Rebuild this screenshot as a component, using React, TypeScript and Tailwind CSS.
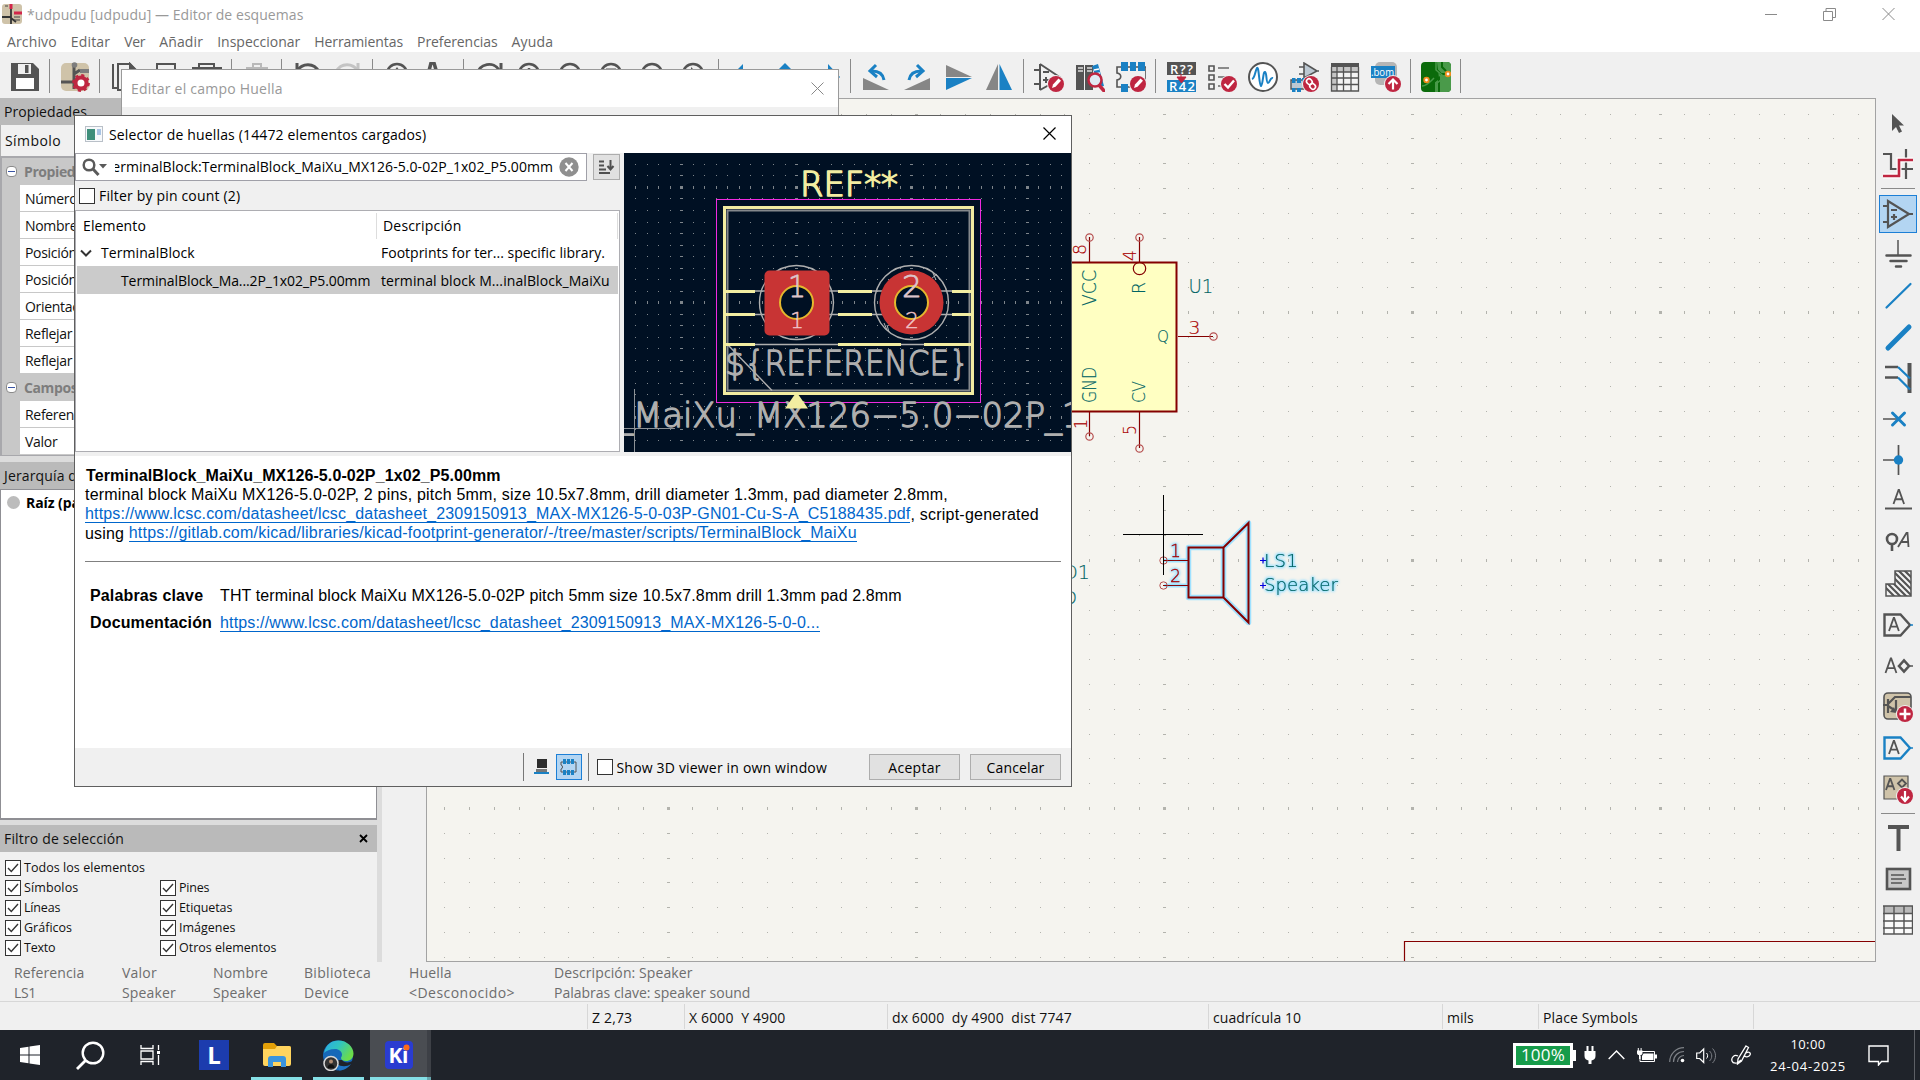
import React, { useLayoutEffect, useRef, useState } from "react";

const DARK = "#545454";
const BLUE = "#1a81c4";
const RED = "#bf2641";

/* Text run whose tracking is tuned so that it fills a known width. */
function Label({ children, w, className = "" }: { children: string; w?: number; className?: string }) {
  const ref = useRef<HTMLSpanElement>(null);
  const [spacing, setSpacing] = useState(0);
  useLayoutEffect(() => {
    if (w && ref.current) setSpacing((w - ref.current.offsetWidth) / children.length);
  }, []);
  return (
    <span
      ref={ref}
      className={"inline-block shrink-0 whitespace-pre " + className}
      style={w ? { letterSpacing: spacing } : undefined}
    >
      {children}
    </span>
  );
}

function Icon({ children, size = 30 }: { children: React.ReactNode; size?: number }) {
  return (
    <svg width={size} height={size} viewBox="0 0 30 30" fill="none" className="shrink-0">
      {children}
    </svg>
  );
}

function Badge({ children }: { children: React.ReactNode }) {
  return (
    <g>
      <circle cx="22" cy="22" r="9" fill="#f0f0f0" />
      <circle cx="22" cy="22" r="8" fill={RED} />
      {children}
    </g>
  );
}

const pencil = <path d="M18 26l1-3.500 5.500-6 2.500 2.300-5.500 6z" fill="#fff" />;

const lens = (
  <g stroke={DARK} strokeWidth="2.600">
    <circle cx="14" cy="12" r="10" />
    <path d="M21 20l8 8" />
  </g>
);

const topGroups: React.ReactNode[][] = [
  [
    <g>
      <path d="M1 1h22l6 6v22H1z" fill={DARK} />
      <path d="M8 2h13v10H8z" fill="#f0f0f0" />
      <path d="M15 3h3.500v8H15z" fill={DARK} />
      <path d="M6 16h18v11H6z" fill="#fff" />
    </g>,
  ],
  [
    <g>
      <rect x="1" y="1" width="28" height="28" rx="5" fill="#cfc3a9" />
      <path d="M14 1v26M1 20h12M14 12l6-4M14 17l6 5" stroke={DARK} strokeWidth="3" />
      <circle cx="14.500" cy="3" r="2.800" fill="#7d7d7d" />
      <rect x="20" y="7" width="9" height="4" fill="#7d7d7d" />
      <circle cx="21" cy="21" r="5.500" stroke={RED} strokeWidth="4" fill="#fff" />
      <circle cx="21" cy="21" r="7.600" stroke={RED} strokeWidth="2.600" strokeDasharray="3 2.970" />
      <circle cx="21" cy="21" r="2" fill="#fff" />
    </g>,
  ],
  [
    <g stroke={DARK} strokeWidth="2"><path d="M3 2v24h5M8 28V2h12l7 7v19z" /><path d="M20 2v8h7z" fill={DARK} /></g>,
    <g><path d="M6 9V2h18v7" stroke={DARK} strokeWidth="2" /><path d="M2 8h26v13H2z" fill={DARK} /></g>,
    <g><path d="M7 6V2h15v4" stroke={DARK} strokeWidth="2" /><path d="M0 5h30v14H0z" fill={DARK} /></g>,
  ],
  [<g stroke="#b9b9b9" strokeWidth="2"><path d="M5 6h20v22H5z" /><path d="M11 5V2h8v3" /></g>],
  [
    <g stroke={DARK} strokeWidth="3"><path d="M5 9C10 1 22 0 27 10" /><path d="M5 1v10h9" /></g>,
    <g stroke="#c4c4c4" strokeWidth="3"><path d="M3 10C8 0 20 1 25 9" /><path d="M25 1v10h-9" /></g>,
  ],
  [
    <g>{lens}<path d="M14 5l5 7h-10z" fill={DARK} /></g>,
    <g><path d="M0 28L7 1h3l8 27" stroke={DARK} strokeWidth="3.500" /></g>,
  ],
  [
    <g stroke={DARK} strokeWidth="3"><path d="M3 13C5 1 20-1 25 8" /><path d="M27 1v9h-9" /></g>,
    <g>{lens}<path d="M14 6v12M8 12h12" stroke={DARK} strokeWidth="2.500" /></g>,
    <g>{lens}<path d="M8 12h12" stroke={DARK} strokeWidth="2.500" /></g>,
    <g>{lens}<path d="M9 7h10v10H9z" fill="#8a8a8a" stroke={DARK} /></g>,
    <g>{lens}<path d="M9 9h10v8H9z" fill={DARK} /></g>,
    <g>{lens}<path d="M12 5l8 8h-8z" fill={DARK} /></g>,
  ],
  [
    <path d="M14 2v26L1 15z" fill={BLUE} />,
    <path d="M15 1l14 14H1z" fill={BLUE} />,
    <path d="M17 2v26l12-13z" fill={BLUE} />,
  ],
  [
    <g><path d="M2 16v12h26z" fill="#868686" /><path d="M23 18c-1-6-5-9-12-9" stroke={BLUE} strokeWidth="3" /><path d="M15 3l-6 6 7 6" stroke={BLUE} strokeWidth="3" /></g>,
    <g><path d="M28 16v12H2z" fill="#868686" /><path d="M7 18c1-6 5-9 12-9" stroke={BLUE} strokeWidth="3" /><path d="M15 3l6 6-7 6" stroke={BLUE} strokeWidth="3" /></g>,
    <g><path d="M3 3v12h26z" fill="#868686" /><path d="M3 16h26L3 28z" fill={BLUE} /></g>,
    <g><path d="M14 2v26H2z" fill="#868686" /><path d="M15.500 2v26H28z" fill={BLUE} /></g>,
  ],
  [
    <g stroke={DARK} strokeWidth="2"><path d="M6 2v26M6 2l21 14M6 28l9-5M0 8h6M0 22h6M9 10h6M9 18h6M12 15v6" /><g stroke="none"><Badge>{pencil}</Badge></g></g>,
    <g>
      <path d="M1 3h8v25H1zM10 3h8v25h-8z" fill={DARK} />
      <path d="M3 6h5M3 9h5M12 6h5M12 9h5" stroke="#ddd" strokeWidth="1.500" />
      <path d="M17 4l6-2 6 22-5 1z" fill={BLUE} />
      <path d="M19 8l5-1M20 12l5-1" stroke="#fff" strokeWidth="1.500" />
      <circle cx="20" cy="18" r="6.500" stroke={RED} strokeWidth="2.500" fill="#dfeaf3" />
      <path d="M24 23l6 7" stroke={RED} strokeWidth="3.500" />
    </g>,
    <g>
      <path d="M1 5v6c5 1 5 6 0 7v7h29V5z" stroke={DARK} strokeWidth="1.600" />
      <path d="M5 0h7v9H5zM14 0h6v9h-6zM22 0h7v9h-7zM5 22h7v8H5z" fill={BLUE} />
      <Badge>{pencil}</Badge>
    </g>,
  ],
  [
    <g>
      <rect x="1" y="0" width="29" height="13" fill={DARK} />
      <rect x="1" y="18" width="29" height="12" fill={BLUE} />
      <text x="4" y="11.500" fontSize="13" fontWeight="600" fill="#fff" fontFamily="Open Sans" textLength="23">R??</text>
      <text x="3" y="29" fontSize="13" fontWeight="600" fill="#fff" fontFamily="Open Sans" textLength="26">R42</text>
      <path d="M15 12v4M11 15h9l-4.500 6z" fill={RED} stroke={RED} />
    </g>,
    <g>
      <path d="M2 4h5v5H2zM2 13h5v5H2zM2 22h5v5H2z" stroke={DARK} strokeWidth="1.600" />
      <path d="M11 6h11M11 15h8M11 24h5" stroke="#8a8a8a" strokeWidth="1.800" />
      <Badge><path d="M17.500 22l3.500 3.500 6-7" stroke="#fff" strokeWidth="2.400" /></Badge>
    </g>,
    <g>
      <circle cx="15" cy="15" r="14" stroke={DARK} strokeWidth="2" fill="#fff" />
      <path d="M4 17c3-1 3-8 5-11 2-2 2 17 4 18 2-1 2-15 4-14 2 1 1 11 3 11s2-6 5-5" stroke={BLUE} strokeWidth="2" />
    </g>,
    <g>
      <path d="M15 1v15l13-7zM10 5h5M10 12h5M28 9h2" stroke={DARK} strokeWidth="1.600" fill="#bcc8d2" />
      <path d="M2 18h18v9H2z" fill="#bcc8d2" stroke={DARK} strokeWidth="1.400" />
      <path d="M3 16h3.500v5H3zM8 16h4v5H8zM3 26h3.500v4H3zM8 26h4v4H8zM13 16h3v5h-3z" fill={BLUE} />
      <Badge>
        <rect x="17" y="17" width="6" height="5" rx="2.500" stroke="#fff" strokeWidth="1.600" transform="rotate(45 20 20)" />
        <rect x="21" y="22" width="6" height="5" rx="2.500" stroke="#fff" strokeWidth="1.600" transform="rotate(45 24 24)" />
      </Badge>
    </g>,
    <g>
      <path d="M1 1h28v4H1z" fill={DARK} />
      <path d="M1 5h28v5H1zM1 10h6v19H1z" fill="#c5c5c5" />
      <path d="M7 10h22v19H7z" fill="#f4f4f4" />
      <path d="M1.500 5v24h27V5M7 5v24M13.500 5v24M21 5v24M1 10h28M1 16h28M1 22.500h28" stroke={DARK} strokeWidth="1.300" />
    </g>,
    <g>
      <rect x="4" y="0" width="22" height="23" rx="5" fill="#b5b5b5" />
      <rect x="0" y="4" width="24" height="12" fill={BLUE} />
      <text x="0" y="13.500" fontSize="10" fill="#fff" fontFamily="Open Sans" textLength="23" lengthAdjust="spacingAndGlyphs">.bom</text>
      <Badge><path d="M22 27.500v-9M17.500 22l4.500-4.500 4.500 4.500" stroke="#fff" strokeWidth="2.200" /></Badge>
    </g>,
  ],
  [
    <g>
      <rect width="30" height="30" rx="4" fill="#0b6b0b" />
      <path d="M16 0h10a4 4 0 0 1 4 4v22a4 4 0 0 1-4 4H14V20l4-4z" fill="#4a9a4a" />
      <path d="M15 0v7l5 5h7M21 0v5l4 4M5 18l5-4V0M10 30v-8l8-6v14" stroke="#0b6b0b" strokeWidth="2" />
      <path d="M15 0v8l6 5v4l-6 5v8M1 24c5 0 8-4 12-8" stroke="#4a9a4a" strokeWidth="1.500" />
      <circle cx="27" cy="12" r="2.300" fill="#fff" stroke="#f08c1a" strokeWidth="1.800" />
      <circle cx="5.500" cy="18" r="2.300" fill="#fff" stroke="#f08c1a" strokeWidth="1.800" />
    </g>,
  ],
];

const arrowTail = <path d="M27 15h3" stroke={BLUE} strokeWidth="1.500" />;
const glyphA = (x: number, y: number, h: number) => (
  <path d={`M${x} ${y}l${h * 0.36}-${h}h.5l${h * 0.36} ${h}M${x + h * 0.13} ${y - h * 0.34}h${h * 0.5}`} stroke={DARK} strokeWidth="1.800" />
);

const sideTop: React.ReactNode[] = [
  <path d="M9 6v17l4-4 3 6 3-1.500-3-6h5z" fill={DARK} />,
  <g><path d="M0 5h8v15h8M14 20h16M23 0v30" stroke={DARK} strokeWidth="2.200" /><path d="M0 27h16V11h14" stroke="#fff" strokeWidth="5" /><path d="M0 27h16V11h14" stroke={RED} strokeWidth="2.600" /></g>,
];

const sideMid: React.ReactNode[] = [
  <g stroke={DARK} strokeWidth="2.200"><path d="M5 2v26l21-13zM0 7h5M0 23h5M26 15h4M8 11h6M8 18h6M11 15v6" /></g>,
  <g stroke={DARK}><path d="M15 0v15" strokeWidth="1.500" /><path d="M3.500 15.500h24M7.500 21h16M13 26.500h5" strokeWidth="2.500" strokeLinecap="round" /></g>,
  <path d="M3.500 26.500l24-23.500" stroke={BLUE} strokeWidth="2.200" strokeLinecap="round" />,
  <path d="M5 26l21-21" stroke={BLUE} strokeWidth="5" strokeLinecap="round" />,
  <g><path d="M2 4h13M2 14.500h13" stroke={DARK} strokeWidth="2.500" /><path d="M26.500 0v30" stroke={DARK} strokeWidth="4" /><path d="M15 4l12 11.500M15 14.500l12 12" stroke={BLUE} strokeWidth="2.200" /></g>,
  <g><path d="M0 15h15" stroke={DARK} strokeWidth="1.500" /><path d="M9.500 9l12 12M21.500 9l-12 12" stroke={BLUE} strokeWidth="3" strokeLinecap="round" /></g>,
  <g><path d="M0 15h15M15.500 0v30" stroke={DARK} strokeWidth="1.700" /><circle cx="15.500" cy="15" r="4.700" fill={BLUE} /></g>,
  <g>{glyphA(10.5, 18, 14)}<path d="M2 22.500h27" stroke={DARK} strokeWidth="2" /></g>,
  <g><circle cx="9" cy="12" r="5" stroke={DARK} strokeWidth="2.600" /><path d="M9 17v7" stroke={DARK} strokeWidth="2.600" /><path d="M15 20l8.500-14h1l1 14M18 15h7" stroke={DARK} strokeWidth="1.800" /></g>,
  <g>
    <clipPath id="hatch"><path d="M12 2h16v25H3V15h9z" /></clipPath>
    <path d="M12 2h16v25H3V15h9z" fill="#f4f4f4" />
    <g clipPath="url(#hatch)"><path d="M8-6l30 30M2-6l34 34M-4-6l36 36M-10-6l38 38M-6 4l28 28M-6 10l24 24M14-6l30 30" stroke={DARK} strokeWidth="2.200" /></g>
    <path d="M12 2h16v25H3V15h9z" stroke={DARK} strokeWidth="1.500" />
  </g>,
  <g><path d="M1.500 4.500h16L27 15l-9.500 10.500h-16z" stroke={DARK} strokeWidth="2.400" />{glyphA(6, 21, 13)}{arrowTail}</g>,
  <g><g>{glyphA(2.5, 22, 14.5)}</g><path d="M16 15l5-5.500 5 5.500-5 5.500z" stroke={DARK} strokeWidth="2.600" /><path d="M26 15h4" stroke={DARK} strokeWidth="1.500" /></g>,
  <g>
    <rect x="1" y="1" width="27" height="26" rx="4" fill="#cfc3a9" stroke={DARK} strokeWidth="1.600" />
    <path d="M5 7v14M0 13h5M5 12l7-7h16M5 14l8 5M13 20V8" stroke={DARK} strokeWidth="2.200" />
    <path d="M13 21l-6-1 4-5z" fill={DARK} />
    <Badge><path d="M22 16.500v11M16.500 22h11" stroke="#fff" strokeWidth="2.500" /></Badge>
  </g>,
  <g><path d="M1.500 4.500h16L27 15l-9.500 10.500h-16z" stroke={BLUE} strokeWidth="2.400" />{glyphA(6, 21, 13)}{arrowTail}</g>,
  <g>
    <path d="M1 2h24v23H1z" fill="#cfc3a9" stroke={DARK} strokeWidth="1.200" />
    {glyphA(3, 16, 11)}
    <path d="M15 9.500l4-4 4 4-4 4z" stroke={DARK} strokeWidth="1.800" />
    <Badge><path d="M22 17v9M18 22.500l4 4.500 4-4.500" stroke="#fff" strokeWidth="2.200" /></Badge>
  </g>,
];

const sideEnd: React.ReactNode[] = [
  <path d="M5 2h21v4h-8.500v22h-4V6H5z" fill={DARK} />,
  <g><rect x="4" y="5" width="23" height="20" fill="#c8c8c8" stroke={DARK} strokeWidth="2.600" /><path d="M8 11h13M8 15h15M8 19h11" stroke={DARK} strokeWidth="1.500" /></g>,
  <g><path d="M1 1h29v8H1z" fill="#b9b9b9" /><path d="M1 9h29v21H1z" fill="#fafafa" /><path d="M1 .5v29M11 .5v29M21 .5v29M29.500 .5v29M0 1h30M0 8.500h30M0 16h30M0 23h30M0 29h30" stroke={DARK} strokeWidth="1.400" /></g>,
];

function VSep({ className = "" }: { className?: string }) {
  return (
    <div className={"flex w-[9px] justify-center " + className}>
      <div className="w-px bg-[#8a8a8a]" />
    </div>
  );
}

function Check({ on }: { on?: boolean }) {
  return (
    <span className="flex h-4 w-4 shrink-0 items-center justify-center border border-[#333] bg-white">
      {on && (
        <svg width="12" height="12" viewBox="0 0 12 12" fill="none">
          <path d="M1 6l3.300 3.500L11 2" stroke="#333" strokeWidth="1.400" />
        </svg>
      )}
    </span>
  );
}

/* Canvas grid: plain points, with longer ticks on every tenth row and column. */
function Grid(p: { x0: number; y0: number; nx: number; ny: number; step: number; mx: number; my: number; color: string }) {
  const marks: React.ReactNode[] = [];
  for (let i = 0; i < p.nx; i++)
    for (let j = 0; j < p.ny; j++) {
      const w = (i - p.mx) % 10 === 0 ? 3 : 1;
      const h = (j - p.my) % 10 === 0 ? 3 : 1;
      const x = Math.round(p.x0 + i * p.step - w / 2);
      const y = Math.round(p.y0 + j * p.step - h / 2);
      marks.push(<rect key={i + "-" + j} x={x} y={y} width={w} height={h} />);
    }
  return <g fill={p.color} shapeRendering="crispEdges">{marks}</g>;
}

/* Stroke-style lettering used on both drawing canvases. */
function Stroke(p: { x: number; y: number; w: number; cap: number; color: string; t: string; up?: boolean; weight?: number; halo?: boolean }) {
  const common = {
    fontFamily: '"DejaVu Sans Light", "DejaVu Sans", sans-serif',
    fontWeight: 200,
    fontSize: p.cap / 0.729,
    textLength: p.w,
    lengthAdjust: "spacingAndGlyphs" as const,
    strokeLinejoin: "round" as const,
  };
  return (
    <g transform={`translate(${p.x} ${p.y})${p.up ? " rotate(-90)" : ""}`}>
      <text
        {...common}
        fill={p.color}
        stroke={p.color}
        strokeWidth={p.weight ?? 0.15}
        className={p.halo ? "[filter:drop-shadow(0_0_1px_#9fe1ff)_drop-shadow(0_0_1px_#9fe1ff)_drop-shadow(0_0_1px_#9fe1ff)]" : ""}
      >
        {p.t}
      </text>
    </g>
  );
}

function Schematic() {
  const teal = "#006464";
  const pin = "#a90000";
  const body = "#840000";
  const speaker = "M1188.500 547.500h35v50h-35zM1223.500 547.500l25-24.500v99.500l-25-25";
  return (
    <svg width="1448" height="862" viewBox="427 99 1448 862" className="block">
      <Grid x0={444.8} y0={114} nx={58} ny={35} step={24.8} mx={9} my={8} color="#b3b3ad" />
      <path d="M1875 941.500H1404.500V961" stroke={body} strokeWidth="1.200" fill="none" />
      <rect x="1000" y="262.500" width="176.500" height="149" fill="#ffffc2" stroke={body} strokeWidth="2" />
      <g stroke={body} strokeWidth="1.200" fill="none">
        <path d="M1089.500 237v25M1139.500 237v25M1089.500 412v24M1139.500 412v36M1178 336.500h35" />
        <circle cx="1139.500" cy="268.500" r="6.200" />
        <g stroke="#b65050">
          <circle cx="1089.500" cy="237.500" r="3.700" />
          <circle cx="1139.500" cy="237.500" r="3.700" />
          <circle cx="1089.500" cy="436.500" r="3.700" />
          <circle cx="1139.500" cy="448.500" r="3.700" />
          <circle cx="1213.500" cy="336.500" r="3.700" />
        </g>
      </g>
      <Stroke t="8" x={1086} y={255} w={11} cap={13} color={pin} up />
      <Stroke t="4" x={1136} y={261} w={11} cap={13} color={pin} up />
      <Stroke t="1" x={1087} y={429} w={10} cap={13} color={pin} up />
      <Stroke t="5" x={1136} y={435} w={10} cap={13} color={pin} up />
      <Stroke t="3" x={1188.500} y={334} w={12} cap={13} color={pin} />
      <Stroke t="VCC" x={1096} y={306} w={36} cap={14} color={teal} up />
      <Stroke t="R" x={1145} y={294} w={12} cap={13} color={teal} up />
      <Stroke t="GND" x={1096} y={403} w={36} cap={14} color={teal} up />
      <Stroke t="CV" x={1145} y={403} w={22} cap={13} color={teal} up />
      <Stroke t="Q" x={1157} y={342} w={12} cap={12} color={teal} />
      <Stroke t="U1" x={1188.500} y={293} w={25} cap={14} color={teal} />
      <Stroke t="D1" x={1063} y={579} w={27} cap={14} color={teal} />
      <Stroke t="D" x={1063} y={604} w={14} cap={13} color={teal} />
      <g fill="none">
        <path d={speaker} stroke="#9fe1ff" strokeWidth="5.500" strokeLinejoin="round" />
        <path d="M1166 560.500h22M1166 585.500h22" stroke="#9fe1ff" strokeWidth="4" strokeLinecap="round" />
        <path d={speaker} stroke={body} strokeWidth="2" />
        <path d="M1163 560.500h25M1163 585.500h25" stroke={body} strokeWidth="1.200" />
        <circle cx="1163.500" cy="560.500" r="3.700" stroke="#b65050" />
        <circle cx="1163.500" cy="585.500" r="3.700" stroke="#b65050" />
      </g>
      <Stroke t="1" x={1170} y={557} w={11} cap={12.500} color={pin} halo weight={0.3} />
      <Stroke t="2" x={1170} y={582} w={11} cap={12.500} color={pin} halo weight={0.3} />
      <Stroke t="LS1" x={1264} y={566.500} w={34} cap={13} color={teal} halo weight={0.2} />
      <Stroke t="Speaker" x={1264} y={591} w={74} cap={13} color={teal} halo weight={0.2} />
      <path d="M1260 560.500h6M1263 557.500v6M1260 585.500h6M1263 582.500v6" stroke="#0000e0" strokeWidth="1.200" />
      <path d="M1163.500 495v79.500M1123 534.500h80" stroke="#000" strokeWidth="1" shapeRendering="crispEdges" />
    </svg>
  );
}

function Preview() {
  const silk = "#f2eda1";
  const fab = "#afafaf";
  return (
    <svg width="447" height="299" viewBox="624 153 447 299" className="block shrink-0 bg-[#001023]">
      <Grid x0={635.5} y0={164.4} nx={38} ny={25} step={11.52} mx={4} my={2} color="#7e858b" />
      <rect x="727.500" y="210.500" width="242" height="180" fill="none" stroke="#84888c" strokeWidth="2" />
      <path d="M727 344l45 46.500" stroke={fab} strokeWidth="1.400" />
      <path d="M725 291h248M725 314.500h248M725 344.500h248" stroke={fab} strokeWidth="1.400" />
      <rect x="724.500" y="207.500" width="248" height="186" fill="none" stroke={silk} strokeWidth="3" />
      <path d="M725 291.500h30M838 291.500h34M952 291.500h20M725 314.500h30M838 314.500h34M952 314.500h20M725 344.500h30M838 344.500h63M924 344.500h48" stroke={silk} strokeWidth="3" />
      <circle cx="796.500" cy="302.500" r="37" fill="none" stroke={fab} strokeWidth="1.400" />
      <circle cx="911.500" cy="302.500" r="37" fill="none" stroke={fab} strokeWidth="1.400" />
      <path d="M884 323l3 7M887 325l2 7M933 273l3 7M936 274l4 6M931 279l6-5" stroke={fab} />
      <rect x="764.500" y="270.500" width="65" height="65" rx="5" fill="#c83434" />
      <circle cx="911.500" cy="302.500" r="32" fill="#c83434" />
      <g fill="#001023" stroke="#e3b72e" strokeWidth="2">
        <circle cx="796.500" cy="302.500" r="16.500" />
        <circle cx="911.500" cy="302.500" r="16.500" />
      </g>
      <Stroke t="1" x={788} y={297} w={18} cap={22} color="#dcc4ca" weight={0.8} />
      <Stroke t="2" x={902} y={297} w={20} cap={22} color="#dcc4ca" weight={0.8} />
      <Stroke t="1" x={790} y={328} w={14} cap={15} color="#f0c4c8" weight={0.4} />
      <Stroke t="2" x={905} y={328} w={14} cap={15} color="#f0c4c8" weight={0.4} />
      <rect x="716.500" y="199.500" width="264" height="203" fill="none" stroke="#f02adf" />
      <Stroke t="REF**" x={800} y={196} w={98} cap={24} color={silk} weight={1.500} />
      <Stroke t="${REFERENCE}" x={725} y={375} w={244} cap={24} color={fab} weight={1.300} />
      <Stroke t="_" x={612} y={427} w={21} cap={24} color={fab} weight={1.300} />
      <Stroke t="MaiXu_MX126−5.0−02P_" x={633} y={427} w={429} cap={24} color={fab} weight={1.300} />
      <Stroke t="1" x={1062} y={427} w={20} cap={24} color={fab} weight={1.300} />
      <path d="M634.500 389v63M624 428.500h51" stroke="#8c9196" fill="none" shapeRendering="crispEdges" />
      <path d="M796.500 392l11.500 16.500h-23z" fill={silk} />
    </svg>
  );
}

function PanelHeader({ children, w, closable }: { children: string; w: number; closable?: boolean }) {
  return (
    <div className="flex h-[27px] shrink-0 items-center justify-between bg-[#bababa] pl-[4px] pr-[9px]">
      <Label w={w}>{children}</Label>
      {closable && (
        <svg width="9" height="9" viewBox="0 0 9 9">
          <path d="M1 1l7 7M8 1l-7 7" stroke="#000" strokeWidth="1.800" />
        </svg>
      )}
    </div>
  );
}

function PropCategory({ children }: { children: string }) {
  return (
    <div className="flex h-[27px] items-center gap-[7px] bg-[#c8c8c8] pl-[4px] font-bold text-[#7d7d7d]">
      <span className="flex h-[11px] w-[11px] items-center justify-center rounded-sm border border-[#8a8a8a] bg-white">
        <span className="h-px w-[7px] bg-[#3a55a5]" />
      </span>
      <span className="tracking-[-0.4px]">{children}</span>
    </div>
  );
}

function PropRow({ children }: { children: string }) {
  return (
    <div className="flex h-[27px] bg-[#c8c8c8]">
      <div className="ml-[18px] flex flex-1 items-center border-b border-[#c8c8c8] bg-white pl-[5px] pt-[2px]">
        <span className="tracking-[-0.3px]">{children}</span>
      </div>
    </div>
  );
}

function FilterItem({ children, w }: { children: string; w: number }) {
  return (
    <div className="flex h-5 w-[155px] items-center gap-[3px]">
      <Check on />
      <Label w={w} className="text-[12.500px]">{children}</Label>
    </div>
  );
}

function LeftPanels() {
  return (
    <div className="flex w-[382px] shrink-0 border-r-[5px] border-[#dcdcdc]">
      <div className="flex flex-1 flex-col">
        <PanelHeader w={83}>Propiedades</PanelHeader>
        <div className="flex h-[31px] items-center border-l border-[#b0b0b0] pl-[4px]">
          <Label w={56}>Símbolo</Label>
        </div>
        <div className="h-[300px] border-2 border-[#a8a8ac] bg-white">
          <PropCategory>Propiedades básicas</PropCategory>
          <PropRow>Número de unidad</PropRow>
          <PropRow>Nombre de unidad</PropRow>
          <PropRow>Posición X</PropRow>
          <PropRow>Posición Y</PropRow>
          <PropRow>Orientación</PropRow>
          <PropRow>Reflejar X</PropRow>
          <PropRow>Reflejar Y</PropRow>
          <PropCategory>Campos</PropCategory>
          <PropRow>Referencia</PropRow>
          <PropRow>Valor</PropRow>
        </div>
        <div className="h-[6px] bg-[#dcdcdc]" />
        <PanelHeader w={150}>Jerarquía del esquema</PanelHeader>
        <div className="h-[331px] border border-b-2 border-[#8f8f94] bg-white">
          <div className="flex h-[25px] items-center gap-[6px] pl-[6px] font-bold text-black">
            <span className="h-[13px] w-[13px] rounded-full bg-[#bcbcbc]" />
            <Label w={100}>Raíz (página 1)</Label>
          </div>
        </div>
        <div className="h-[5px] bg-[#dcdcdc]" />
        <PanelHeader w={120} closable>Filtro de selección</PanelHeader>
        <div className="flex flex-1 flex-col pl-[5px] pt-[6px]">
          <FilterItem w={121}>Todos los elementos</FilterItem>
          <div className="grid grid-cols-[155px_155px]">
            <FilterItem w={54}>Símbolos</FilterItem>
            <FilterItem w={30}>Pines</FilterItem>
            <FilterItem w={36}>Líneas</FilterItem>
            <FilterItem w={53}>Etiquetas</FilterItem>
            <FilterItem w={48}>Gráficos</FilterItem>
            <FilterItem w={56}>Imágenes</FilterItem>
            <FilterItem w={31}>Texto</FilterItem>
            <FilterItem w={97}>Otros elementos</FilterItem>
          </div>
        </div>
      </div>
    </div>
  );
}

function SideTool({ children, active }: { children: React.ReactNode; active?: boolean }) {
  return (
    <div className="flex h-[41.100px] items-center justify-center">
      <div className={"flex h-[38px] w-[38px] items-center justify-center " + (active ? "border border-[#1c7fd6] bg-[#b3d5f2]" : "")}>
        <Icon>{children}</Icon>
      </div>
    </div>
  );
}

function RightToolbar() {
  return (
    <div className="flex w-[44px] shrink-0 flex-col pt-[4px]">
      {sideTop.map((ic, i) => <SideTool key={i}>{ic}</SideTool>)}
      <div className="mx-auto my-1 h-px w-[34px] shrink-0 bg-[#8a8a8a]" />
      {sideMid.map((ic, i) => <SideTool key={i} active={i === 0}>{ic}</SideTool>)}
      <div className="mx-auto mb-[4px] mt-[3px] h-px w-[34px] shrink-0 bg-[#8a8a8a]" />
      {sideEnd.map((ic, i) => <SideTool key={i}>{ic}</SideTool>)}
    </div>
  );
}

const menus: [string, number][] = [
  ["Archivo", 50], ["Editar", 39], ["Ver", 21], ["Añadir", 44], ["Inspeccionar", 83], ["Herramientas", 89], ["Preferencias", 80], ["Ayuda", 42],
];

const info: [string, number, string, number, string][] = [
  ["Referencia", 70, "LS1", 22, "w-[108px]"],
  ["Valor", 35, "Speaker", 54, "w-[91px]"],
  ["Nombre", 55, "Speaker", 54, "w-[91px]"],
  ["Biblioteca", 67, "Device", 45, "w-[105px]"],
  ["Huella", 43, "<Desconocido>", 106, "w-[145px]"],
  ["Descripción: Speaker", 139, "Palabras clave: speaker sound", 196, "w-[300px]"],
];

const status: [string, number, string][] = [
  ["Z 2,73", 40, "w-[97px]"],
  ["X 6000  Y 4900", 97, "w-[203px]"],
  ["dx 6000  dy 4900  dist 7747", 180, "w-[321px]"],
  ["cuadrícula 10", 88, "w-[234px]"],
  ["mils", 27, "w-[96px]"],
  ["Place Symbols", 95, "w-[216px]"],
];

function FieldDialog() {
  return (
    <div className="absolute left-[121px] top-[69px] h-[100px] w-[718px] border border-[#9a9a9a] bg-[#f0f0f0]">
      <div className="flex h-[37px] items-center justify-between bg-white pl-[9px] pr-[14px] text-[#999]">
        <Label w={152}>Editar el campo Huella</Label>
        <svg width="13" height="13" viewBox="0 0 13 13"><path d="M.5 .5l12 12M12.500 .5l-12 12" stroke="#888" /></svg>
      </div>
    </div>
  );
}

const link = "text-[#0066cc] border-b border-[#0066cc] h-[18px] leading-[18px]";

function ChooserDialog() {
  return (
    <div className="absolute left-[74px] top-[115px] flex h-[672px] w-[998px] flex-col border border-[#5f5f5f] bg-[#f0f0f0] text-black">
      <div className="flex h-[37px] shrink-0 items-center bg-white pl-[10px] pr-[15px]">
        <svg width="18" height="16" viewBox="0 0 18 16" className="mb-[2px] mr-[6px]">
          <rect x=".5" y=".5" width="17" height="15" fill="#f7f9fb" stroke="#b9c0c8" />
          <rect x="2" y="3" width="8" height="11" fill="#3f8f7b" />
          <rect x="12" y="3" width="4" height="6" fill="#a9c4e4" />
        </svg>
        <Label w={317}>Selector de huellas (14472 elementos cargados)</Label>
        <svg width="13" height="13" viewBox="0 0 13 13" className="mb-[2px] ml-auto"><path d="M.5 .5l12 12M12.500 .5l-12 12" stroke="#000" strokeWidth="1.200" /></svg>
      </div>
      <div className="flex h-[299px] shrink-0">
        <div className="flex w-[549px] shrink-0 flex-col pr-[4px]">
          <div className="flex h-[28px] items-center justify-between">
            <div className="flex h-[28px] w-[512px] items-center border border-[#a0a0a8] bg-white pl-[6px] pr-[7px]">
              <svg width="26" height="19" viewBox="0 0 26 19" fill="none">
                <circle cx="7" cy="7" r="5.300" stroke="#5a5a5a" strokeWidth="2.500" />
                <path d="M11 11l5.500 6" stroke="#5a5a5a" strokeWidth="3" />
                <path d="M17 6h8l-4 4.500z" fill="#5a5a5a" />
              </svg>
              <div className="ml-[7px] flex w-[438px] justify-end overflow-hidden">
                <Label w={448}>TerminalBlock:TerminalBlock_MaiXu_MX126-5.0-02P_1x02_P5.00mm</Label>
              </div>
              <svg width="20" height="20" viewBox="0 0 20 20" className="ml-auto">
                <circle cx="10" cy="10" r="9.700" fill="#8f8f8f" />
                <path d="M6.500 6l7 8M13.500 6l-7 8" stroke="#fff" strokeWidth="2" />
              </svg>
            </div>
            <div className="flex h-[26px] w-[27px] items-center justify-center border border-[#adadad] bg-[#e1e1e1]">
              <svg width="17" height="16" viewBox="0 0 17 16" fill="none" stroke="#505050" strokeWidth="2">
                <path d="M1 2.500h5M1 6.500h5M1 10.500h7M1 14h11M12.500 1v9M9.500 7l3 3.500 3-3.500" />
              </svg>
            </div>
          </div>
          <div className="flex h-[29px] items-center gap-[4px] pl-[4px]">
            <Check />
            <Label w={141} className="pt-px">Filter by pin count (2)</Label>
          </div>
          <div className="h-[242px] border border-[#adadb2] bg-white px-px">
            <div className="flex h-[28px] items-center pt-px">
              <div className="flex h-[26px] w-[300px] items-center border-r border-[#ddd] pl-[6px]"><Label w={63}>Elemento</Label></div>
              <div className="flex h-[26px] flex-1 items-center border-r border-[#ddd] pl-[6px]"><Label w={78}>Descripción</Label></div>
            </div>
            <div className="flex h-[27px] items-center">
              <div className="flex w-[304px] items-center pl-[3px]">
                <svg width="12" height="8" viewBox="0 0 12 8" fill="none" className="mr-[9px]"><path d="M1 1.500l5 5 5-5" stroke="#333" strokeWidth="2" /></svg>
                <Label w={94}>TerminalBlock</Label>
              </div>
              <Label w={224}>Footprints for ter... specific library.</Label>
            </div>
            <div className="flex h-[28px] items-center bg-[#cbcbcb] pt-px">
              <div className="w-[304px] pl-[44px]"><Label w={249}>TerminalBlock_Ma...2P_1x02_P5.00mm</Label></div>
              <Label w={229}>terminal block M...inalBlock_MaiXu</Label>
            </div>
          </div>
        </div>
        <Preview />
      </div>
      <div className="mt-[4px] flex h-[292px] shrink-0 flex-col bg-white pl-[10px] pr-[10px] pt-[10px] font-['Liberation_Sans',Arial,sans-serif] text-[16px] leading-[19px]">
        <div className="pl-px font-bold"><Label w={415}>TerminalBlock_MaiXu_MX126-5.0-02P_1x02_P5.00mm</Label></div>
        <div className="flex h-[19px]"><Label w={863}>terminal block MaiXu MX126-5.0-02P, 2 pins, pitch 5mm, size 10.5x7.8mm, drill diameter 1.3mm, pad diameter 2.8mm,</Label></div>
        <div className="flex h-[19px] pt-px">
          <Label w={825} className={link}>https://www.lcsc.com/datasheet/lcsc_datasheet_2309150913_MAX-MX126-5-0-03P-GN01-Cu-S-A_C5188435.pdf</Label>
          <Label w={129}>, script-generated</Label>
        </div>
        <div className="flex h-[19px] pt-px">
          <Label w={44}>{"using "}</Label>
          <Label w={728} className={link}>https://gitlab.com/kicad/libraries/kicad-footprint-generator/-/tree/master/scripts/TerminalBlock_MaiXu</Label>
        </div>
        <div className="mt-[19px] h-px shrink-0 bg-[#808080]" />
        <div className="mt-[24px] flex h-[27px] pl-[5px]">
          <div className="w-[130px] font-bold"><Label w={113}>Palabras clave</Label></div>
          <Label w={682}>THT terminal block MaiXu MX126-5.0-02P pitch 5mm size 10.5x7.8mm drill 1.3mm pad 2.8mm</Label>
        </div>
        <div className="flex h-[27px] pl-[5px]">
          <div className="w-[130px] font-bold"><Label w={122}>Documentación</Label></div>
          <Label w={600} className={link + " mt-px"}>https://www.lcsc.com/datasheet/lcsc_datasheet_2309150913_MAX-MX126-5-0-0...</Label>
        </div>
      </div>
      <div className="flex flex-1 items-center justify-end pr-[10px]">
        <div className="mr-[10px] h-[28px] w-px bg-[#777]" />
        <svg width="15" height="18" viewBox="0 0 15 18" className="mr-[7px]">
          <path d="M3 1h10v9H3z" fill="#2d2d2d" />
          <path d="M2 11h11v3H2z" fill="#777" />
          <path d="M0 15h15" stroke={BLUE} strokeWidth="2" />
        </svg>
        <div className="flex h-[26px] w-[26px] items-center justify-center border border-[#1c7fd6] bg-[#b3d5f2]">
          <svg width="17" height="18" viewBox="0 0 17 18" fill="none">
            <path d="M1 4v3c2 0 2 4 0 4v3h15V4z" stroke={DARK} />
            <path d="M3 1h3v5H3zM7 1h3v5H7zM11 1h3v5h-3zM3 12h3v5H3zM7 12h3v5H7zM11 12h3v5h-3z" fill={BLUE} />
          </svg>
        </div>
        <div className="ml-[6px] mr-[8px] h-[28px] w-px bg-[#777]" />
        <Check />
        <Label w={210} className="ml-[4px] mr-[42px] pt-px">Show 3D viewer in own window</Label>
        <div className="mr-[10px] flex h-[26px] w-[91px] items-center justify-center border border-[#adadad] bg-[#e1e1e1] pt-px"><Label w={52}>Aceptar</Label></div>
        <div className="flex h-[26px] w-[91px] items-center justify-center border border-[#adadad] bg-[#e1e1e1] pt-px"><Label w={58}>Cancelar</Label></div>
      </div>
    </div>
  );
}

function TaskCell({ children, line, active, className }: { children: React.ReactNode; line?: boolean; active?: boolean; className: string }) {
  return (
    <div className={"flex flex-col justify-between " + (active ? "bg-[#4a4d52] " : "") + className}>
      <div className="flex h-[47px] items-center justify-center pt-[3px]">{children}</div>
      <div className={"h-[3px] " + (line ? "bg-[#85dfe6]" : "")} />
    </div>
  );
}

function Taskbar() {
  return (
    <div className="flex h-[50px] bg-[#1f232a] text-white">
      <TaskCell className="w-[60px]">
        <svg width="20" height="20" viewBox="0 0 20 20" fill="#fff"><path d="M0 3l8.500-1.300V9.500H0zM9.500 1.500L20 0v9.500H9.500zM0 10.500h8.500v7.800L0 17zM9.500 10.500H20V20L9.500 18.500z" /></svg>
      </TaskCell>
      <TaskCell className="w-[60px]">
        <svg width="29" height="29" viewBox="0 0 29 29" fill="none" stroke="#fff"><circle cx="17" cy="12" r="10.300" strokeWidth="2.400" /><path d="M9.500 19.500L1 28" strokeWidth="2.800" /></svg>
      </TaskCell>
      <TaskCell className="w-[60px]">
        <svg width="21" height="20" viewBox="0 0 21 20" fill="none" stroke="#fff" strokeWidth="1.300"><path d="M1 0v3.500h12V0M1 20v-3.500h12V20M1 6h12v8H1zM18.500 0v5M18.500 10v10" /><path d="M17 6h3v3h-3z" fill="#fff" stroke="none" /></svg>
      </TaskCell>
      <TaskCell className="w-[68px]">
        <span className="flex h-[30px] w-[30px] items-center justify-center bg-[#1c3cae] font-['Open_Sans'] text-[24px] font-bold leading-none">L</span>
      </TaskCell>
      <TaskCell className="ml-[3px] w-[51px]" line>
        <svg width="28" height="24" viewBox="0 0 28 24">
          <path d="M0 2a2 2 0 0 1 2-2h9l3 3h12a2 2 0 0 1 2 2v4H0z" fill="#e3a008" />
          <path d="M0 6h12l2-3h12a2 2 0 0 1 2 2v16a2 2 0 0 1-2 2H2a2 2 0 0 1-2-2z" fill="#ffd45e" />
          <path d="M5 24v-8a3 3 0 0 1 3-3h12a3 3 0 0 1 3 3v8h-5v-5h-8v5z" fill="#3a94dd" />
        </svg>
      </TaskCell>
      <TaskCell className="ml-[11px] w-[51px]" line>
        <svg width="31" height="31" viewBox="0 0 31 31">
          <defs>
            <linearGradient id="edge" x1="0" y1="0" x2="1" y2=".5"><stop offset="0" stopColor="#2aa8e8" /><stop offset=".5" stopColor="#30c4c0" /><stop offset="1" stopColor="#6bdc4a" /></linearGradient>
          </defs>
          <circle cx="15" cy="15.500" r="15" fill="#1668b8" />
          <path d="M1 13C3 4 9 .5 15.500 .5 24 .5 30.500 7 30.500 13.500c0 5-3.500 7.500-7.500 7.500-3 0-5-1-5-3 0-1 1-1.500 1-3.500 0-3-3-5.500-7-5.500C7 9 3 11 1 13z" fill="url(#edge)" />
          <path d="M19 20c2 3 7 3 10.500 1-2 5-6 8-11 9-5-3-4-8-3-10z" fill="#1f232a" />
          <path d="M14 24c4 3 10 3 14 0-3 4-7 6.500-12 6.500z" fill="#1f74c4" />
          <circle cx="8" cy="23.500" r="7" fill="#333" stroke="#d8d8d8" strokeWidth="1.500" />
          <circle cx="8" cy="21.500" r="2" fill="#b08a70" />
          <path d="M4.500 28c0-5 7-5 7 0z" fill="#111" />
        </svg>
      </TaskCell>
      <TaskCell className="ml-[6px] w-[57px]" line active>
        <svg width="28" height="28" viewBox="0 0 28 28">
          <rect width="28" height="28" rx="4" fill="#2a3cd0" />
          <text x="3.500" y="22" fontSize="21" fontWeight="700" fill="#fff" fontFamily="Open Sans" textLength="20">Ki</text>
          <circle cx="21.500" cy="6.500" r="3" fill="#ff6a1a" />
        </svg>
      </TaskCell>
      <TaskCell className="w-[4px] opacity-70" line active>{null}</TaskCell>
      <div className="ml-auto flex items-center">
        <div className="flex h-[25px] w-[60px] items-center justify-center border-[3px] border-white bg-[#169b4a] text-[17px]"><Label w={44}>100%</Label></div>
        <div className="mr-[8px] h-[11px] w-[3px] bg-white" />
        <svg width="12" height="20" viewBox="0 0 12 20" fill="#fff"><path d="M2.500 1h2v5h3V1h2v5h2v5c0 3-2 4-4 4.500V19h-3v-3.500C2.500 15 .5 14 .5 11V6h2z" /></svg>
        <svg width="17" height="10" viewBox="0 0 17 10" fill="none" className="ml-[12px]"><path d="M.7 9l7.800-8 7.800 8" stroke="#fff" strokeWidth="1.400" /></svg>
        <svg width="20" height="15" viewBox="0 0 20 15" fill="none" className="ml-[12px]"><path d="M5 3.500h12.500v10H3V8" stroke="#fff" /><path d="M6.500 5.500h10v6.500H5V8zM18 6.500h2v4h-2zM0 2.500h5.500V5c0 1.500-1 2-2 2v4H2V7C1 7 0 6.500 0 5zM.8 0h1v3h-1zM3.600 0h1v3h-1z" fill="#fff" /></svg>
        <svg width="16" height="16" viewBox="0 0 16 16" fill="none" className="ml-[12px]"><path d="M.7 15C.7 7 7 .7 15 .7M4.500 15C4.500 9 9 4.500 15 4.500M8.500 15c0-3.500 3-6.500 6.500-6.500" stroke="#7d8086" strokeWidth="1.200" /><circle cx="13.500" cy="13.500" r="1.800" fill="#fff" /></svg>
        <svg width="21" height="17" viewBox="0 0 21 17" fill="none" className="ml-[11px]"><path d="M.7 6v5.500h3l4 4V2l-4 4z" stroke="#fff" strokeWidth="1.200" /><path d="M10.500 6c1.500 1.500 1.500 4 0 5.500" stroke="#fff" /><path d="M13.500 4c3 3 3 7 0 10M16.500 1.500c4 4 4 10.500 0 14.500" stroke="#7d8086" /></svg>
        <svg width="21" height="20" viewBox="0 0 21 20" fill="none" className="ml-[14px]" stroke="#fff" strokeWidth="1.300"><path d="M15 1l2.500 1.500-7 13.500-4 3 .5-5zM7 11c-4-2-7 2-6 5s6 3 9-1M15 8c3-2 5 0 4 2s-5 3-6 0" /></svg>
        <div className="ml-[17px] flex w-[78px] flex-col items-center text-[13px] leading-[22px]">
          <Label w={35}>10:00</Label>
          <Label w={76}>24-04-2025</Label>
        </div>
        <svg width="21" height="21" viewBox="0 0 21 21" fill="none" className="ml-[21px]"><path d="M1 1h19v15.500h-6.500L10.500 20v-3.500H1z" stroke="#fff" strokeWidth="1.400" /></svg>
        <div className="ml-[25px] mr-[5px] h-[50px] w-px bg-[#5d6066]" />
      </div>
    </div>
  );
}

export default function App() {
  return (
    <div className="relative flex h-[1080px] w-[1920px] flex-col overflow-hidden bg-[#f0f0f0] font-['Open_Sans','Noto_Sans',sans-serif] text-[14px] leading-[20px] text-[#111]">
      <div className="flex h-[30px] shrink-0 items-center bg-white pb-[2px] pl-[2px] pr-[25px] text-[#999]">
        <svg width="20" height="20" viewBox="0 0 20 20" fill="none" className="mr-[5px]">
          <rect width="20" height="20" rx="3" fill="#cfc3a9" />
          <path d="M9 0v20M0 13h9M9 14l5 4" stroke="#333" strokeWidth="1.800" />
          <path d="M9 0v5M12 9h8" stroke="#d2274a" strokeWidth="3" />
          <path d="M12 13h6M12 16h6M3 2h3" stroke="#444" strokeWidth="1.200" />
        </svg>
        <Label w={276} className="pt-px">*udpudu [udpudu] — Editor de esquemas</Label>
        <svg width="130" height="14" viewBox="0 0 130 14" fill="none" stroke="#8a8a8a" className="ml-auto">
          <path d="M0 7.500h12M58.500 4.500h9v9h-9zM61 4V1.500h9.500v9H68M117.500 1l12 12M129.500 1l-12 12" />
        </svg>
      </div>
      <div className="flex h-[22px] shrink-0 items-center gap-[14px] bg-white pl-[7px] pt-[2px] text-[#666]">
        {menus.map(([t, w]) => <Label key={t} w={w}>{t}</Label>)}
      </div>
      <div className="flex h-[46px] shrink-0 items-center pl-[4px] pt-[2px]">
        {topGroups.map((g, i) => (
          <div key={i} className="flex h-[34px]">
            {g.map((ic, j) => (
              <div key={j} className="flex w-[41px] items-center justify-center pt-px"><Icon>{ic}</Icon></div>
            ))}
            <VSep />
          </div>
        ))}
      </div>
      <div className="flex h-[864px] shrink-0">
        <LeftPanels />
        <div className="w-[44px] shrink-0" />
        <div className="w-[1450px] border border-[#a3a3a3] bg-[#f5f4ef]">
          <Schematic />
        </div>
        <RightToolbar />
      </div>
      <div className="flex h-[40px] shrink-0 border-b border-[#d7d7d7] pl-[14px] pt-px text-[#6d6d6d]">
        {info.map(([a, wa, b, wb, cls]) => (
          <div key={a} className={"flex flex-col " + cls}>
            <Label w={wa} className="self-start">{a}</Label>
            <Label w={wb} className="self-start">{b}</Label>
          </div>
        ))}
      </div>
      <div className="flex h-[28px] shrink-0 items-center pl-[587px]">
        {status.map(([t, w, cls], i) => (
          <div key={t} className={"flex h-[25px] items-center border-l border-[#d7d7d7] pl-[4px] pt-[3px] " + cls + (i === status.length - 1 ? " border-r" : "")}>
            <Label w={w}>{t}</Label>
          </div>
        ))}
      </div>
      <Taskbar />
      <FieldDialog />
      <ChooserDialog />
    </div>
  );
}
